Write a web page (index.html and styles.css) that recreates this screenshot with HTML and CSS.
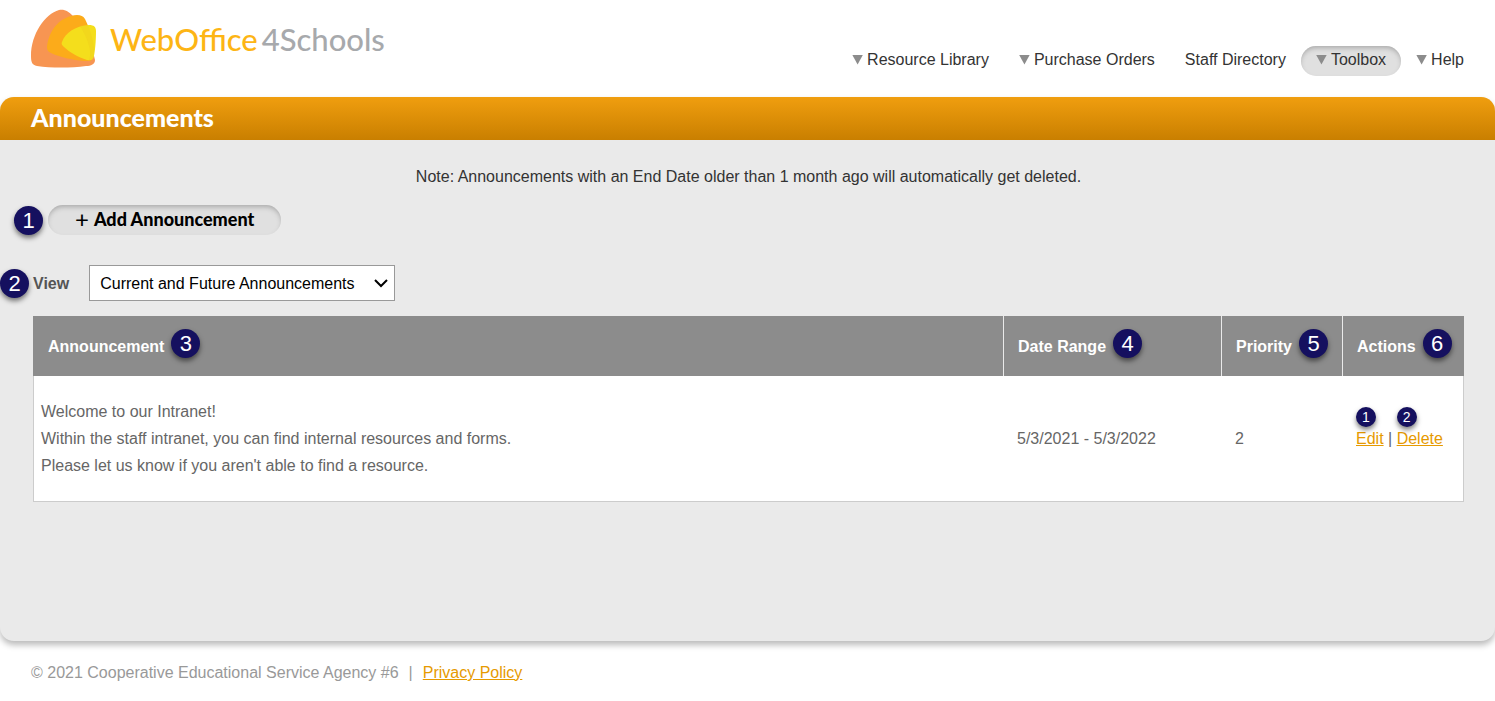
FILE: index.html
```html
<!DOCTYPE html>
<html lang="en">

<head>
    <meta charset="UTF-8">
    <title>Announcements</title>
    <link rel="stylesheet" href="styles.css">
</head>

<body>
    <header class="header">
        <a href="#" class="logo">
            <svg class="logo-mark" viewBox="0 0 65 59" width="65" height="59" aria-hidden="true">
                <path d="M28 0C34-1 38 2 42 6C52 17 61 34 64 50C64 54 60 56 55 56C40 58 20 58 6 56C1 55 0 52 0 46C0 24 14 4 28 0Z" fill="#f79552"/>
                <path d="M16 37C18 19 30 6 46 5C50 5 52 6 54 9C60 21 65 37 62 48C61 51 58 51 53 51C42 50 28 47 20 43C17 42 16 40 16 37Z" fill="#fcab1a"/>
                <path d="M31 32C34 23 44 16 58 15C63 15 65 17 65 21C65 32 64 41 63 46C62 50 60 51 56 50C47 47 38 42 33 37C31 35 30 34 31 32Z" fill="#f4de1c"/>
                <path d="M49 16C53 15 56 15 57 15C61 26 65 39 62 48C61 50 60 51 58 50C62 42 56 27 49 16Z" fill="#f0cf1c" opacity=".5"/>
            </svg>
            <span class="logo-text"><span class="logo-web">WebOffice</span><span class="logo-schools">4Schools</span></span>
        </a>
        <nav class="nav">
            <a href="#"><span class="arrow"></span>Resource Library</a>
            <a href="#"><span class="arrow"></span>Purchase Orders</a>
            <a href="#">Staff Directory</a>
            <a href="#" class="active"><span class="arrow"></span>Toolbox</a>
            <a href="#"><span class="arrow"></span>Help</a>
        </nav>
    </header>

    <main class="panel">
        <h1 class="title">Announcements</h1>
        <div class="content">
            <p class="note">Note: Announcements with an End Date older than 1 month ago will automatically get deleted.</p>
            <div class="add-row">
                <span class="badge">1</span>
                <button type="button" class="add"><span class="plus">+</span>Add Announcement</button>
            </div>
            <div class="view-row">
                <span class="badge">2</span>
                <label for="view">View</label>
                <div class="select">
                    <select id="view">
                        <option>Current and Future Announcements</option>
                    </select>
                    <svg class="chevron" viewBox="0 0 14 9" width="14" height="9" aria-hidden="true">
                        <path d="M1 1L7 7L13 1" fill="none" stroke="#000" stroke-width="2"/>
                    </svg>
                </div>
            </div>
            <table class="list">
                <thead>
                    <tr>
                        <th><div class="head">Announcement <span class="badge">3</span></div></th>
                        <th class="col-date"><div class="head">Date Range <span class="badge">4</span></div></th>
                        <th class="col-priority"><div class="head">Priority <span class="badge">5</span></div></th>
                        <th class="col-actions"><div class="head">Actions <span class="badge">6</span></div></th>
                    </tr>
                </thead>
                <tbody>
                    <tr>
                        <td class="message">Welcome to our Intranet!<br>
                            Within the staff intranet, you can find internal resources and forms.<br>
                            Please let us know if you aren't able to find a resource.</td>
                        <td>5/3/2021 - 5/3/2022</td>
                        <td>2</td>
                        <td class="actions"><span class="action"><span class="badge small">1</span><a href="#">Edit</a></span> | <span class="action"><span class="badge small">2</span><a href="#">Delete</a></span></td>
                    </tr>
                </tbody>
            </table>
        </div>
    </main>

    <footer class="footer">
        <span>© 2021 Cooperative Educational Service Agency #6</span>
        <span>|</span>
        <a href="#">Privacy Policy</a>
    </footer>
</body>

</html>
```

FILE: styles.css
```css
* {
    box-sizing: border-box;
}

body {
    margin: 0;
    background: #fff;
    color: #333;
    font-family: "Liberation Sans", Arial, sans-serif;
    font-size: 16px;
    line-height: 27px;
}

.header {
    display: flex;
    justify-content: space-between;
    align-items: flex-start;
    height: 97px;
    padding: 10px 16px 0 31px;
}

.logo {
    display: flex;
    gap: 14px;
    text-decoration: none;
}

.logo-mark {
    display: block;
    overflow: visible;
}

.logo-text {
    font-family: Lato, sans-serif;
    font-size: 31px;
    font-weight: 500;
    line-height: 59px;
}

.logo-web {
    color: #fdb515;
}

.logo-schools {
    margin-left: 4px;
    color: #a7a9ac;
}

.nav {
    display: flex;
    padding-top: 36px;
}

.nav a {
    display: flex;
    align-items: center;
    height: 30px;
    padding: 0 15px 3px;
    border-radius: 15px;
    color: #333;
    text-decoration: none;
}

.nav .active {
    background: #e0e0e0;
    box-shadow: inset 0 3px 5px -1px #aaa;
}

.arrow {
    width: 11px;
    height: 10px;
    margin-right: 4px;
    background: #8c8c8c;
    clip-path: polygon(0 0, 100% 0, 50% 100%);
}

.panel {
    min-height: 544px;
    border-radius: 14px;
    background: #eaeaea;
    box-shadow: 0 4px 6px #bbb;
    overflow: hidden;
}

.title {
    margin: 0;
    padding: 0 31px 2px;
    background: linear-gradient(#f09e0f, #c97f00);
    color: #fff;
    font-family: Lato, sans-serif;
    font-size: 25px;
    font-weight: 900;
    line-height: 41px;
}

.content {
    padding: 23px 31px 0 33px;
}

.note {
    margin: 0;
    text-align: center;
}

.badge {
    display: flex;
    flex: none;
    justify-content: center;
    align-items: center;
    width: 29px;
    height: 29px;
    border-radius: 50%;
    background: #15105f;
    box-shadow: 0 3px 5px rgba(0, 0, 0, .5);
    color: #fff;
    font-size: 22px;
    font-weight: normal;
}

.small {
    width: 20px;
    height: 20px;
    font-size: 14px;
}

.add-row {
    display: flex;
    align-items: center;
    gap: 5px;
    margin: 15px 0 0 -19px;
}

.add {
    display: flex;
    align-items: center;
    gap: 5px;
    height: 30px;
    padding: 0 27px 3px;
    border: 0;
    border-radius: 15px;
    background: #e0e0e0;
    box-shadow: inset 0 3px 5px -1px #aaa;
    color: #000;
    font-family: Lato, sans-serif;
    font-size: 18px;
    font-weight: 900;
}

.plus {
    font-size: 24px;
    line-height: 24px;
    font-weight: normal;
}

.view-row {
    display: flex;
    align-items: center;
    margin: 30px 0 15px -33px;
}

.view-row label {
    margin: 0 20px 0 4px;
    color: #555;
    font-weight: bold;
}

.select {
    position: relative;
}

.select select {
    display: block;
    width: 306px;
    height: 36px;
    padding: 0 10px;
    border: 1px solid #999;
    border-radius: 0;
    background: #fff;
    color: #000;
    font-family: inherit;
    font-size: 16px;
    appearance: none;
}

.chevron {
    position: absolute;
    top: 14px;
    right: 7px;
    pointer-events: none;
}

.list {
    width: 100%;
    border-collapse: separate;
    border-spacing: 0;
    table-layout: fixed;
}

.list th {
    height: 60px;
    padding: 0 0 0 14px;
    border-left: 1px solid #eaeaea;
    background: #8c8c8c;
    color: #fff;
    text-align: left;
}

.list th:first-child {
    padding-left: 15px;
    border-left: 0;
}

.head {
    display: flex;
    align-items: center;
    gap: 7px;
}

.head .badge {
    margin-bottom: 5px;
}

.col-date {
    width: 218px;
}

.col-priority {
    width: 121px;
}

.col-actions {
    width: 122px;
}

.list td {
    padding: 22px 0 22px 14px;
    border-bottom: 1px solid #ccc;
    background: #fff;
    color: #666;
}

.list .message {
    padding-left: 7px;
    border-left: 1px solid #ccc;
}

.list .actions {
    border-right: 1px solid #ccc;
}

.action {
    position: relative;
}

.action .badge {
    position: absolute;
    left: 0;
    bottom: 20px;
}

a {
    color: #e69a00;
}

.footer {
    display: flex;
    gap: 10px;
    padding: 18px 31px;
    color: #999;
}
```
